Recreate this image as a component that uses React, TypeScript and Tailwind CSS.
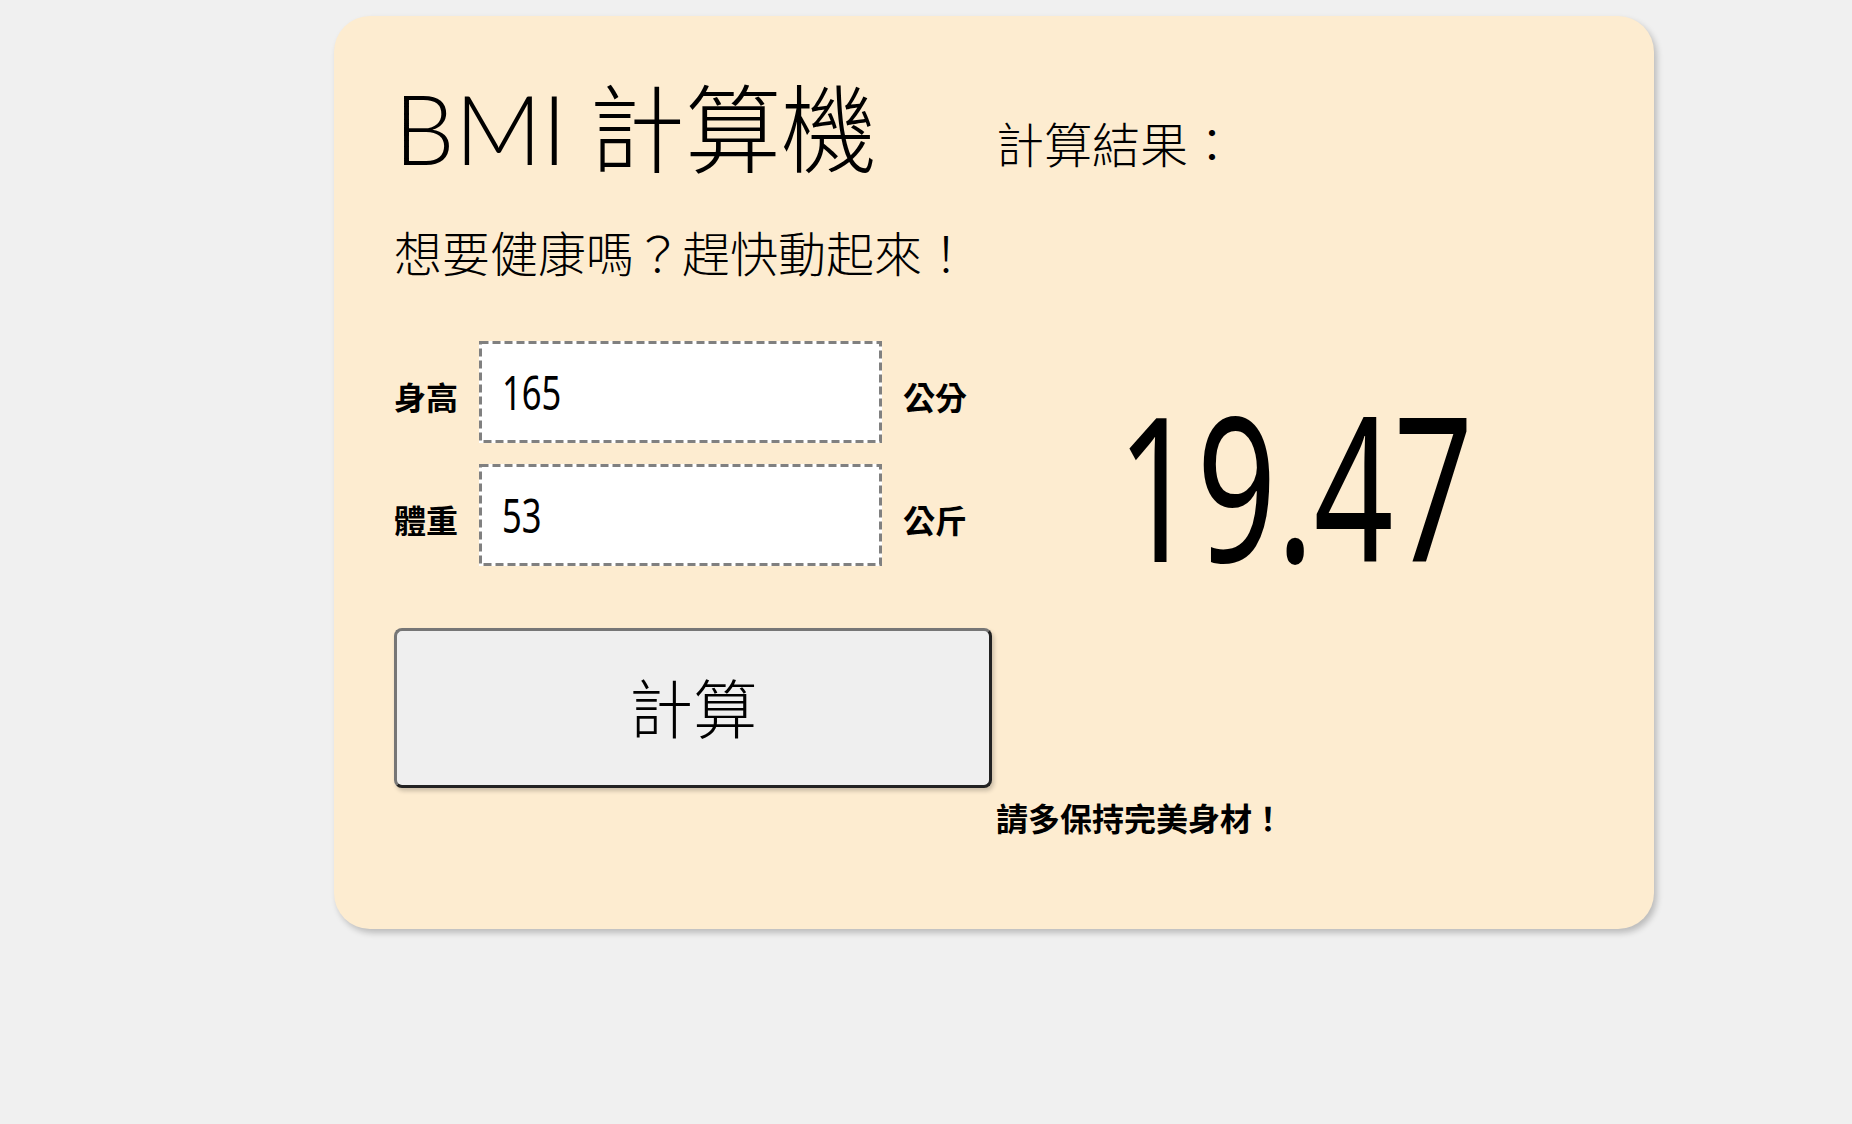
function Row({ label, value, unit }: { label: string; value: string; unit: string }) {
  return (
    <div className="flex items-baseline">
      <span className="w-[64px] text-[32px] leading-none font-bold whitespace-nowrap">{label}</span>
      <div className="relative ml-[21px] flex h-[102px] w-[403px] items-center bg-white pl-[23px]">
        <svg className="pointer-events-none absolute inset-0" width="403" height="102" viewBox="0 0 403 102">
          <rect
            x="1.5"
            y="1.5"
            width="400"
            height="99"
            fill="none"
            stroke="#808080"
            strokeWidth="3"
            strokeDasharray="8 4"
          />
        </svg>
        <span className="inline-block origin-left scale-x-[0.72] font-['Noto_Sans',sans-serif] text-[48px] leading-none">
          {value}
        </span>
      </div>
      <span className="ml-[21px] text-[32px] leading-none font-bold whitespace-nowrap">{unit}</span>
    </div>
  );
}

export default function App() {
  return (
    <div className="min-h-screen bg-[#f0f0f0] pl-[334px] pt-[16px] font-['Noto_Sans_CJK_TC','Noto_Sans',sans-serif] text-black">
      <div className="flex w-[1320px] rounded-[36px] bg-[#fdecd0] px-[60px] pt-[60px] pb-[96px] shadow-[3px_4px_6px_rgba(0,0,0,0.22)]">
        <div className="flex w-[602px] flex-col">
          <h1 className="h-[96px] text-[96px] leading-none font-light whitespace-nowrap">
            <span className="font-['Lato','Noto_Sans',sans-serif] font-light">BMI</span>
            <span className="ml-[22px]">計算機</span>
          </h1>
          <p className="mt-[55px] text-[48px] leading-none font-light whitespace-nowrap">想要健康嗎？趕快動起來！</p>
          <div className="mt-[66px] flex flex-col gap-[21px]">
            <Row label="身高" value="165" unit="公分" />
            <Row label="體重" value="53" unit="公斤" />
          </div>
          <button
            type="button"
            className="mt-[62px] h-[160px] w-[598px] rounded-[8px] border-[3px] border-solid border-t-[#767676] border-l-[#767676] border-r-[#222222] border-b-[#222222] bg-[#efefef] pb-[7px] text-[64px] leading-none font-light shadow-[2px_3px_4px_rgba(0,0,0,0.2)]"
          >
            計算
          </button>
        </div>
        <div className="flex flex-1 flex-col">
          <div className="mt-[42px] text-[48px] leading-none font-light whitespace-nowrap">計算結果：</div>
          <div className="mt-[217px] h-[202px] text-center font-['Noto_Sans',sans-serif] text-[202px] leading-none">
            <span className="inline-block scale-x-[0.69]">19.47</span>
          </div>
          <div className="mt-[216px] text-[32px] leading-none font-bold whitespace-nowrap">請多保持完美身材！</div>
        </div>
      </div>
    </div>
  );
}
